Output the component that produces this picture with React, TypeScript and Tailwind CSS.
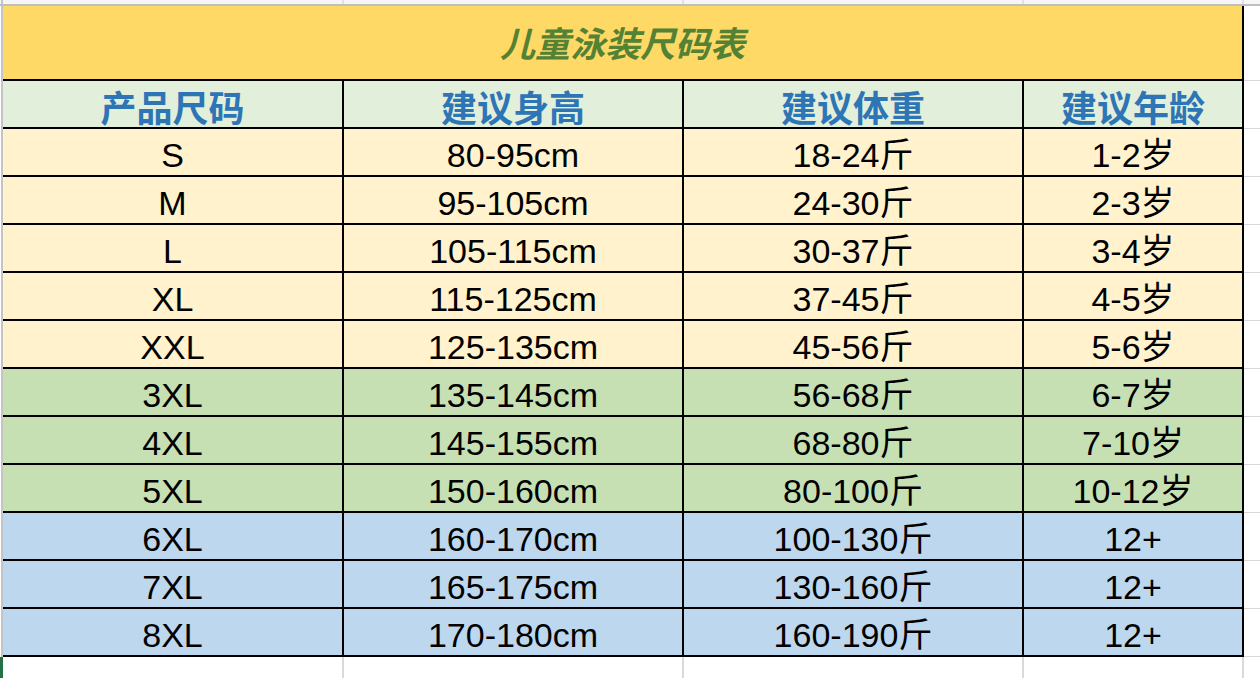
const rows = [
  { size: "S", height: "80-95cm", weight: "18-24斤", age: "1-2岁", bg: "bg-[#fff2cc]" },
  { size: "M", height: "95-105cm", weight: "24-30斤", age: "2-3岁", bg: "bg-[#fff2cc]" },
  { size: "L", height: "105-115cm", weight: "30-37斤", age: "3-4岁", bg: "bg-[#fff2cc]" },
  { size: "XL", height: "115-125cm", weight: "37-45斤", age: "4-5岁", bg: "bg-[#fff2cc]" },
  { size: "XXL", height: "125-135cm", weight: "45-56斤", age: "5-6岁", bg: "bg-[#fff2cc]" },
  { size: "3XL", height: "135-145cm", weight: "56-68斤", age: "6-7岁", bg: "bg-[#c6e0b4]" },
  { size: "4XL", height: "145-155cm", weight: "68-80斤", age: "7-10岁", bg: "bg-[#c6e0b4]" },
  { size: "5XL", height: "150-160cm", weight: "80-100斤", age: "10-12岁", bg: "bg-[#c6e0b4]" },
  { size: "6XL", height: "160-170cm", weight: "100-130斤", age: "12+", bg: "bg-[#bdd7ee]" },
  { size: "7XL", height: "165-175cm", weight: "130-160斤", age: "12+", bg: "bg-[#bdd7ee]" },
  { size: "8XL", height: "170-180cm", weight: "160-190斤", age: "12+", bg: "bg-[#bdd7ee]" },
]

const widths = ["w-[341px]", "w-[340px]", "w-[340px]", "w-[220px]"]
const headers = ["产品尺码", "建议身高", "建议体重", "建议年龄"]

const Gutter = () => (
  <div className="w-[3px] shrink-0 border-r-2 border-[#c4c4c4] bg-white" />
)

const Spare = () => (
  <div className="flex-1 border-b border-[#d9d9d9] bg-white" />
)

const Cell = ({
  w,
  bg,
  children,
  className = "",
}: {
  w: string
  bg: string
  children: React.ReactNode
  className?: string
}) => (
  <div
    className={`flex shrink-0 items-center justify-center border-r-2 border-b-2 border-black ${w} ${bg} ${className}`}
  >
    {children}
  </div>
)

export default function App() {
  return (
    <div className="flex h-[678px] w-[1260px] flex-col overflow-hidden bg-white font-['Liberation_Sans','Noto_Sans_CJK_SC',sans-serif] text-black">
      {/* top strip of the sheet */}
      <div className="flex h-[6px] border-b-2 border-[#bfbfbf] bg-[#f6f6f6]">
        <div className="w-[3px] shrink-0 border-r-2 border-[#c4c4c4]" />
        {widths.map((w) => (
          <div key={w + "t"} className={`${w} shrink-0 border-r-2 border-[#e2e2e2]`} />
        ))}
        <div className="flex-1" />
      </div>

      {/* title */}
      <div className="flex h-[75px]">
        <Gutter />
        <div className="flex w-[1241px] shrink-0 items-center justify-center border-r-2 border-b-2 border-black bg-[#ffd966]">
          <span className="font-['Noto_Sans_CJK_SC',sans-serif] text-[35px] font-bold italic text-[#548235]">
            儿童泳装尺码表
          </span>
        </div>
        <Spare />
      </div>

      {/* header */}
      <div className="flex h-[48px]">
        <Gutter />
        {headers.map((h, i) => (
          <Cell key={h} w={widths[i]} bg="bg-[#e2efda]" className="pt-[3px]">
            <span className="font-['Noto_Sans_CJK_SC',sans-serif] text-[36px] font-bold text-[#2e75b6]">
              {h}
            </span>
          </Cell>
        ))}
        <Spare />
      </div>

      {rows.map((r) => (
        <div key={r.size} className="flex h-[48px]">
          <Gutter />
          {[r.size, r.height, r.weight, r.age].map((v, i) => (
            <Cell key={i} w={widths[i]} bg={r.bg} className="pt-[5px]">
              <span className="text-[34px] leading-none">{v}</span>
            </Cell>
          ))}
          <Spare />
        </div>
      ))}

      {/* empty rows below */}
      <div className="flex flex-1">
        <div className="w-[3px] shrink-0 bg-[#217346]" />
        {widths.map((w) => (
          <div key={w + "b"} className={`${w} shrink-0 border-r-2 border-[#dadada]`} />
        ))}
        <div className="flex-1" />
      </div>
    </div>
  )
}
